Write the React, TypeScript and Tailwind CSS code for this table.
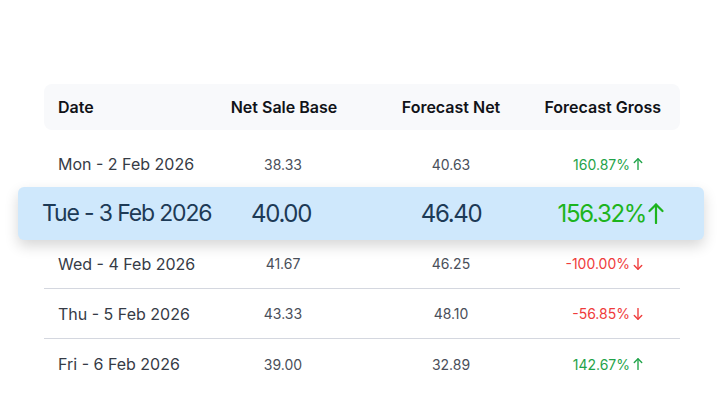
import React from "react";

type Row = { date: string; base: string; net: string; gross: string; up: boolean };

const rows: Row[] = [
  { date: "Mon - 2 Feb 2026", base: "38.33", net: "40.63", gross: "160.87%", up: true },
  { date: "Tue - 3 Feb 2026", base: "40.00", net: "46.40", gross: "156.32%", up: true },
  { date: "Wed - 4 Feb 2026", base: "41.67", net: "46.25", gross: "-100.00%", up: false },
  { date: "Thu - 5 Feb 2026", base: "43.33", net: "48.10", gross: "-56.85%", up: false },
  { date: "Fri - 6 Feb 2026", base: "39.00", net: "32.89", gross: "142.67%", up: true },
];

function Arrow({ up, big }: { up: boolean; big?: boolean }) {
  const w = big ? 16 : 10;
  const h = big ? 21 : 12;
  return (
    <svg
      width={w}
      height={h}
      viewBox="0 0 16 21"
      fill="none"
      stroke="currentColor"
      strokeWidth={big ? 2.2 : 2.4}
      strokeLinecap="round"
      strokeLinejoin="round"
      style={{ transform: up ? undefined : "rotate(180deg)" }}
    >
      <path d="M8 20V1.5" />
      <path d="M1.5 8 8 1.5 14.5 8" />
    </svg>
  );
}

const grid = "grid grid-cols-[156px_166px_170px_144px] items-center";

export default function App() {
  return (
    <div
      className="w-[722px] h-[410px] bg-white overflow-hidden"
      style={{ fontFamily: "Inter, 'Noto Sans', sans-serif" }}
    >
      <div className="ml-[44px] mt-[84px] w-[636px]">
        <div className={`${grid} h-[46px] rounded-lg bg-[#f8f9fb] text-[16px] font-semibold text-[#111318]`}>
          <div className="pl-[14px]">Date</div>
          <div className="text-center pl-[2px]">Net Sale Base</div>
          <div className="text-center">Forecast Net</div>
          <div className="text-right pr-[19px] whitespace-nowrap">Forecast Gross</div>
        </div>
        <div className="h-[9px]" />
        {rows.map((r, i) => {
          if (i === 1) {
            return (
              <div
                key={r.date}
                className="relative z-10 -ml-[26px] -mr-[24px] -mt-[2px] -mb-[1px] h-[53px] rounded-md bg-[#cfe8fc] pl-[26px] pr-[24px] shadow-[0_6px_14px_rgba(0,0,0,0.16)]"
              >
                <div className={`${grid} h-full text-[24px] tracking-[-0.055em] text-[#1d3a56]`}>
                  <div className="-ml-[2px] whitespace-nowrap text-[23px] tracking-[-0.05em]">{r.date}</div>
                  <div className="text-center pr-[4px]">{r.base}</div>
                  <div className="text-center">{r.net}</div>
                  <div className="flex items-center justify-end gap-[2px] pr-[16px] text-[#1db41d]">
                    <span>{r.gross}</span>
                    <Arrow up big />
                  </div>
                </div>
              </div>
            );
          }
          const border = i === 2 || i === 3 ? "border-b border-[#d4d7df]" : "";
          return (
            <div key={r.date} className={`${grid} h-[50px] ${border}`}>
              <div className="pl-[14px] text-[16px] text-[#363b46] whitespace-nowrap">{r.date}</div>
              <div className="text-center text-[14px] text-[#4a4f5a]">{r.base}</div>
              <div className="text-center text-[14px] text-[#4a4f5a]">{r.net}</div>
              <div
                className={`flex items-center justify-end gap-[3px] pr-[37px] text-[14px] ${
                  r.up ? "text-[#1fa349]" : "text-[#ef3b3b]"
                }`}
              >
                <span>{r.gross}</span>
                <Arrow up={r.up} />
              </div>
            </div>
          );
        })}
      </div>
    </div>
  );
}
